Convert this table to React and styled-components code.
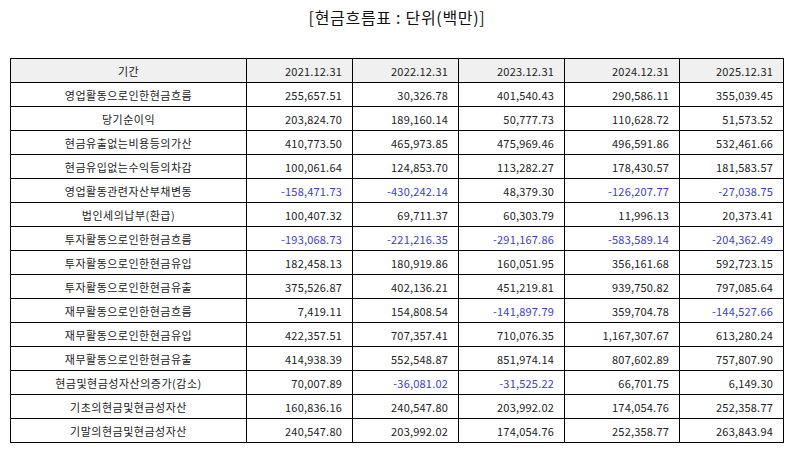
import React from "react";
import styled, { createGlobalStyle } from "styled-components";

const Global = createGlobalStyle`
  html, body { margin: 0; padding: 0; background: #fff; }
  body { font-family: "Noto Sans CJK KR", "Noto Sans", sans-serif; color: #222; }
`;

const Page = styled.div`
  padding: 7px 10px 0 10px;
`;

const Title = styled.div`
  text-align: center;
  font-size: 16px;
  line-height: 20px;
  height: 20px;
  margin-bottom: 31px;
  color: #111;
  letter-spacing: 0.7px;
`;

const Table = styled.table`
  border-collapse: collapse;
  table-layout: fixed;
  width: 774px;
  font-size: 11px;
`;

const Row = styled.tr`
  height: 24px;
`;

const HeadCell = styled.th`
  background: #f0f0f0;
  border: 1px solid #000;
  font-weight: normal;
  padding: 0 10px;
  text-align: ${(p) => (p.$left ? "center" : "right")};
  letter-spacing: ${(p) => (p.$left ? "0.5px" : "0.2px")};
  color: #222;
`;

const Cell = styled.td`
  border: 1px solid #000;
  padding: 0 10px;
  text-align: ${(p) => (p.$label ? "center" : "right")};
  letter-spacing: ${(p) => (p.$label ? "0.5px" : "0.2px")};
  color: ${(p) => (p.$neg ? "#3b3bdc" : "#222")};
  white-space: nowrap;
`;

const widths = [236, 106, 106, 106, 115, 104];
const years = ["2021.12.31", "2022.12.31", "2023.12.31", "2024.12.31", "2025.12.31"];

const rows = [
  ["영업활동으로인한현금흐름", "255,657.51", "30,326.78", "401,540.43", "290,586.11", "355,039.45"],
  ["당기순이익", "203,824.70", "189,160.14", "50,777.73", "110,628.72", "51,573.52"],
  ["현금유출없는비용등의가산", "410,773.50", "465,973.85", "475,969.46", "496,591.86", "532,461.66"],
  ["현금유입없는수익등의차감", "100,061.64", "124,853.70", "113,282.27", "178,430.57", "181,583.57"],
  ["영업활동관련자산부채변동", "-158,471.73", "-430,242.14", "48,379.30", "-126,207.77", "-27,038.75"],
  ["법인세의납부(환급)", "100,407.32", "69,711.37", "60,303.79", "11,996.13", "20,373.41"],
  ["투자활동으로인한현금흐름", "-193,068.73", "-221,216.35", "-291,167.86", "-583,589.14", "-204,362.49"],
  ["투자활동으로인한현금유입", "182,458.13", "180,919.86", "160,051.95", "356,161.68", "592,723.15"],
  ["투자활동으로인한현금유출", "375,526.87", "402,136.21", "451,219.81", "939,750.82", "797,085.64"],
  ["재무활동으로인한현금흐름", "7,419.11", "154,808.54", "-141,897.79", "359,704.78", "-144,527.66"],
  ["재무활동으로인한현금유입", "422,357.51", "707,357.41", "710,076.35", "1,167,307.67", "613,280.24"],
  ["재무활동으로인한현금유출", "414,938.39", "552,548.87", "851,974.14", "807,602.89", "757,807.90"],
  ["현금및현금성자산의증가(감소)", "70,007.89", "-36,081.02", "-31,525.22", "66,701.75", "6,149.30"],
  ["기초의현금및현금성자산", "160,836.16", "240,547.80", "203,992.02", "174,054.76", "252,358.77"],
  ["기말의현금및현금성자산", "240,547.80", "203,992.02", "174,054.76", "252,358.77", "263,843.94"],
];

export default function App() {
  return (
    <Page>
      <Global />
      <Title>[현금흐름표 : 단위(백만)]</Title>
      <Table>
        <colgroup>
          {widths.map((w, i) => (
            <col key={i} style={{ width: w }} />
          ))}
        </colgroup>
        <thead>
          <Row>
            <HeadCell $left>기간</HeadCell>
            {years.map((y) => (
              <HeadCell key={y}>{y}</HeadCell>
            ))}
          </Row>
        </thead>
        <tbody>
          {rows.map((r) => (
            <Row key={r[0]}>
              <Cell $label>{r[0]}</Cell>
              {r.slice(1).map((v, i) => (
                <Cell key={i} $neg={v.startsWith("-")}>{v}</Cell>
              ))}
            </Row>
          ))}
        </tbody>
      </Table>
    </Page>
  );
}
